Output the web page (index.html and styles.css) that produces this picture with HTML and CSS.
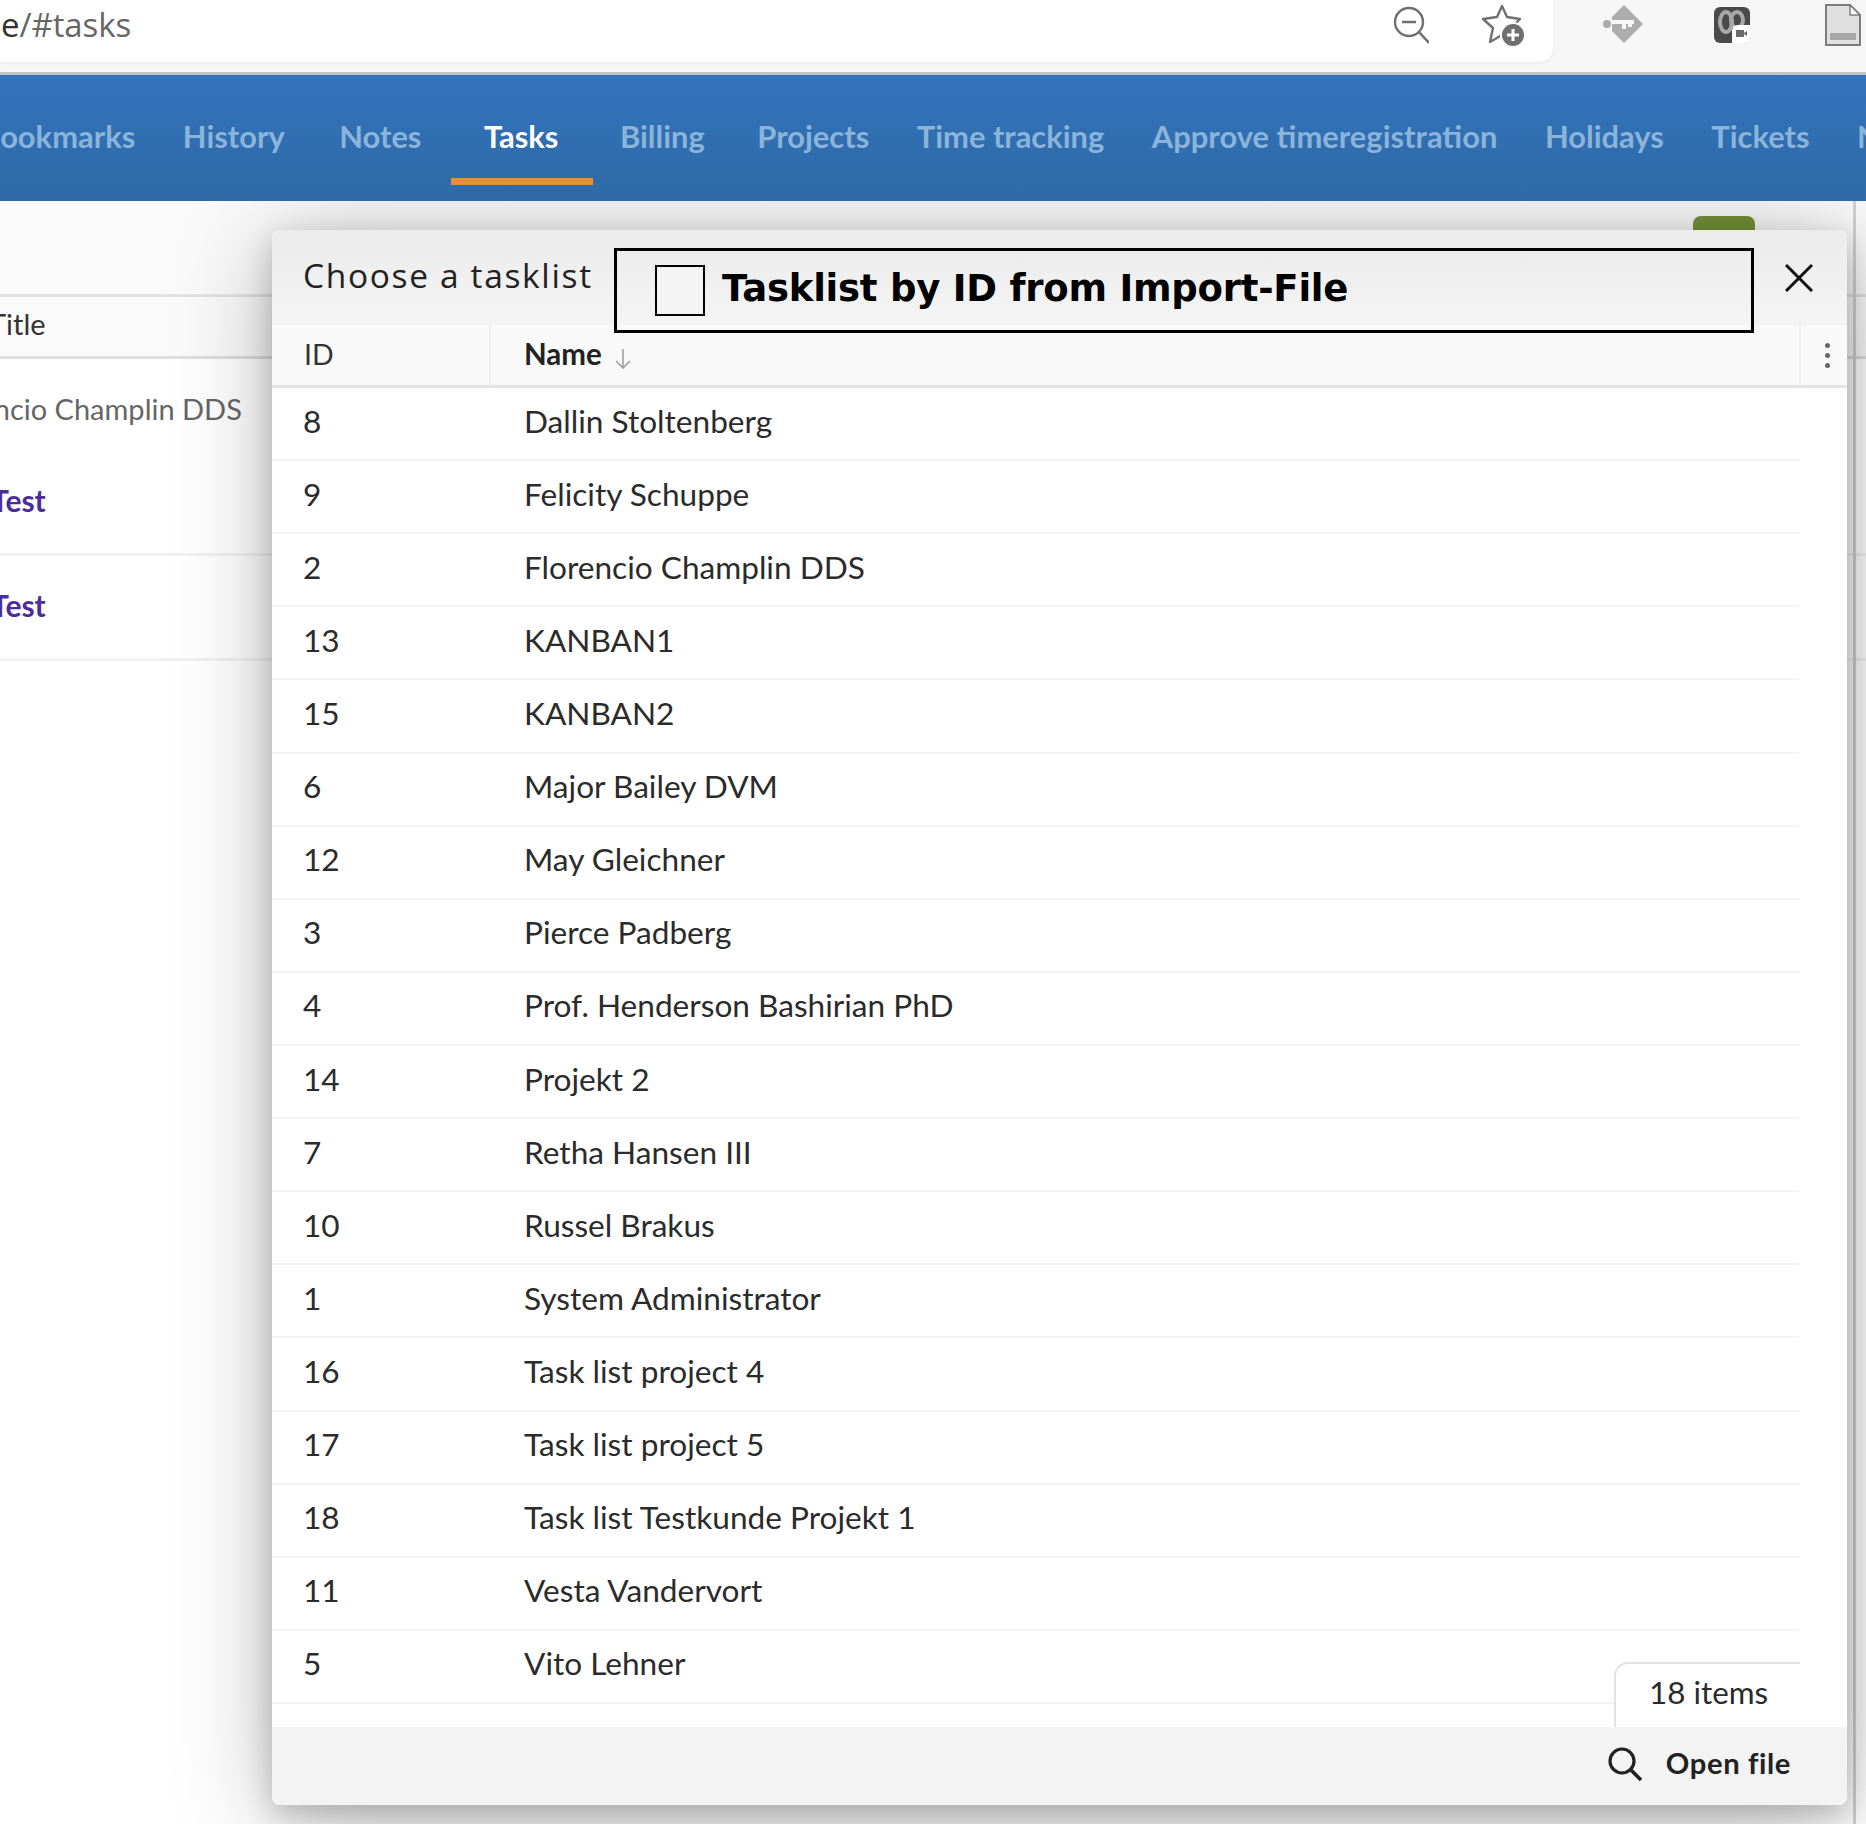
FILE: index.html
```html
<!DOCTYPE html>
<html lang="en">
<head>
<meta charset="utf-8">
<title>Tasks</title>
<link rel="stylesheet" href="styles.css">
</head>
<body>
<div class="page">
  <header class="browser">
    <div class="address">
      <div class="url"><span class="url-dark">e</span>/#tasks</div>
      <svg class="addr-icon zoom-icon" viewBox="0 0 36 40" width="36" height="40"><circle cx="16" cy="16" r="14" fill="none" stroke="#707070" stroke-width="2.4"/><path d="M9 16h14M26 26l10 11" fill="none" stroke="#707070" stroke-width="2.6"/></svg>
      <svg class="addr-icon star-icon" viewBox="0 0 44 44" width="44" height="44"><path d="M21 2l5 11 13 2-9 9 3 14-12-7-12 7 3-14-10-9 14-2z" fill="none" stroke="#707070" stroke-width="2.4" stroke-linejoin="round"/><circle cx="32" cy="31" r="12" fill="#707070" stroke="#fff" stroke-width="2"/><path d="M32 25v12M26 31h12" stroke="#fff" stroke-width="3"/></svg>
    </div>
    <div class="extensions">
      <svg viewBox="0 0 42 42" width="42" height="42"><path d="M22 1l19 19-19 19-12-12v-14z" fill="#acacac"/><path d="M8 18h24M22 18v7M28 18v5" fill="none" stroke="#f6f6f6" stroke-width="4"/><circle cx="5" cy="20" r="4" fill="#acacac"/></svg>
      <svg viewBox="0 0 36 36" width="36" height="36"><rect width="36" height="36" rx="6" fill="#4a4a4a"/><ellipse cx="12" cy="15" rx="6" ry="10" fill="none" stroke="#a8a8a8" stroke-width="4"/><ellipse cx="23" cy="13" rx="6" ry="8" fill="none" stroke="#a8a8a8" stroke-width="4"/><path d="M18 24q0-6 6-6h12v12q0 6-6 6H18z" fill="#fff"/><rect x="22" y="23" width="8" height="7" fill="#6a6a6a"/><path d="M30 26l3-2v5l-3-2z" fill="#6a6a6a"/></svg>
      <svg viewBox="0 0 36 42" width="36" height="42"><path d="M1 1h24l10 10v30H1z" fill="#e0e0e0" stroke="#7c7c7c" stroke-width="2"/><path d="M25 1v10h10z" fill="#fff" stroke="#7c7c7c" stroke-width="1.500"/><rect x="5" y="29" width="26" height="7" fill="#a8a8a8"/></svg>
    </div>
  </header>

  <nav class="nav">
    <a class="nav-item nav-cut">Bookmarks</a>
    <a class="nav-item">History</a>
    <a class="nav-item nav-notes">Notes</a>
    <a class="nav-item nav-active">Tasks</a>
    <a class="nav-item nav-billing">Billing</a>
    <a class="nav-item">Projects</a>
    <a class="nav-item">Time tracking</a>
    <a class="nav-item">Approve timeregistration</a>
    <a class="nav-item">Holidays</a>
    <a class="nav-item">Tickets</a>
    <a class="nav-item">Notes</a>
  </nav>

  <main class="content">
    <div class="toolbar"><span class="green-btn"></span></div>
    <div class="bg-head">Title</div>
    <div class="bg-row bg-row-plain">Florencio Champlin DDS</div>
    <div class="bg-row bg-row-link">Test</div>
    <div class="bg-row bg-row-link">Test</div>

    <section class="modal">
      <div class="modal-head">
        <h2 class="modal-title">Choose a tasklist</h2>
        <label class="import-box"><span class="check"></span><span class="import-label">Tasklist by ID from Import-File</span></label>
        <svg class="close" viewBox="0 0 28 28" width="28" height="28"><path d="M1 1l26 26M27 1L1 27" stroke="#111" stroke-width="3" fill="none"/></svg>
      </div>
      <div class="col-head">
        <div class="cell-id">ID</div>
        <div class="cell-name cell-name-head">Name <svg class="sort" viewBox="0 0 18 20" width="18" height="20"><path d="M9 0v19M2 12l7 7 7-7" fill="none" stroke="#a0a0a0" stroke-width="1.600"/></svg></div>
        <div class="cell-menu"><i></i><i></i><i></i></div>
      </div>
      <div class="rows">
        <div class="row"><div class="cell-id">8</div><div class="cell-name">Dallin Stoltenberg</div></div>
        <div class="row"><div class="cell-id">9</div><div class="cell-name">Felicity Schuppe</div></div>
        <div class="row"><div class="cell-id">2</div><div class="cell-name">Florencio Champlin DDS</div></div>
        <div class="row"><div class="cell-id">13</div><div class="cell-name">KANBAN1</div></div>
        <div class="row"><div class="cell-id">15</div><div class="cell-name">KANBAN2</div></div>
        <div class="row"><div class="cell-id">6</div><div class="cell-name">Major Bailey DVM</div></div>
        <div class="row"><div class="cell-id">12</div><div class="cell-name">May Gleichner</div></div>
        <div class="row"><div class="cell-id">3</div><div class="cell-name">Pierce Padberg</div></div>
        <div class="row"><div class="cell-id">4</div><div class="cell-name">Prof. Henderson Bashirian PhD</div></div>
        <div class="row"><div class="cell-id">14</div><div class="cell-name">Projekt 2</div></div>
        <div class="row"><div class="cell-id">7</div><div class="cell-name">Retha Hansen III</div></div>
        <div class="row"><div class="cell-id">10</div><div class="cell-name">Russel Brakus</div></div>
        <div class="row"><div class="cell-id">1</div><div class="cell-name">System Administrator</div></div>
        <div class="row"><div class="cell-id">16</div><div class="cell-name">Task list project 4</div></div>
        <div class="row"><div class="cell-id">17</div><div class="cell-name">Task list project 5</div></div>
        <div class="row"><div class="cell-id">18</div><div class="cell-name">Task list Testkunde Projekt 1</div></div>
        <div class="row"><div class="cell-id">11</div><div class="cell-name">Vesta Vandervort</div></div>
        <div class="row"><div class="cell-id">5</div><div class="cell-name">Vito Lehner</div></div>
        <div class="count">18 items</div>
      </div>
      <div class="modal-foot">
        <svg viewBox="0 0 36 36" width="36" height="36"><circle cx="15" cy="15" r="12" fill="none" stroke="#222" stroke-width="3.200"/><path d="M24 24l10 10" stroke="#222" stroke-width="3.600"/></svg>
        <span class="open-file">Open file</span>
      </div>
    </section>
  </main>
</div>
</body>
</html>
```

FILE: styles.css
```css
* { box-sizing: border-box; }
html, body { margin: 0; padding: 0; }
body { width: 1866px; height: 1824px; overflow: hidden; background: #fff; font-family: Lato, "Liberation Sans", sans-serif; color: #222; }
.page { width: 1866px; height: 1824px; display: flex; flex-direction: column; overflow: hidden; }

.browser { height: 75px; flex: none; display: flex; background: #f6f6f6; border-bottom: 3px solid #c4c4c4; }
.address { width: 1553px; height: 62px; background: #fff; border-bottom-right-radius: 14px; display: flex; align-items: flex-start; box-shadow: 0 1px 3px rgba(0,0,0,.06); }
.url { flex: 1; font-family: "Open Sans", sans-serif; font-size: 33px; line-height: 50px; color: #666; margin-left: 1px; letter-spacing: -.1px; }
.url-dark { color: #333; }
.addr-icon { flex: none; margin-top: 6px; }
.zoom-icon { margin-right: 52px; margin-top: 6px; }
.star-icon { margin-right: 28px; margin-top: 4px; }
.extensions { flex: 1; display: flex; align-items: flex-start; padding: 4px 0 0 49px; }
.extensions svg { flex: none; }
.extensions svg:nth-child(2) { margin: 3px 0 0 70px; }
.extensions svg:nth-child(3) { margin: 0 0 0 75px; }

.nav { height: 126px; flex: none; display: flex; padding-top: 40px; gap: 47.500px; background: linear-gradient(#3274bc, #2f69a7); }
.nav-item { flex: none; height: 65px; font-size: 30.900px; font-weight: 700; line-height: 44px; color: #8ab4da; white-space: nowrap; }
.nav-cut { margin-left: -20px; }
.nav-notes { margin-left: 7px; margin-right: -1px; }
.nav-active { color: #fff; padding: 0 35px 0 33px; margin: 0 -21px 0 -17px; position: relative; }
.nav-active::after { content: ""; position: absolute; left: 0; right: 0; top: 63px; height: 7px; background: #e8902a; }
.nav-billing { margin-right: 5px; }

.content { flex: 1; position: relative; background: #fff; overflow: hidden; }
.content::before { content: ""; position: absolute; left: 1853px; top: 0; bottom: 0; width: 3px; background: #d2d2d2; }
.toolbar { height: 96px; background: #fafafa; border-bottom: 3px solid #e2e2e2; }
.green-btn { position: absolute; left: 1693px; top: 15px; width: 62px; height: 30px; background: #759338; border-radius: 8px 8px 0 0; }
.bg-head { height: 62px; background: #fafafa; border-bottom: 3px solid #dedede; font-size: 29px; line-height: 54px; color: #333; margin-left: -11px; }
.bg-row { font-size: 30px; white-space: nowrap; }
.bg-row-plain { height: 92px; line-height: 100px; font-size: 29px; color: #666; margin-left: -71px; width: 500px; }
.bg-row-link { height: 105px; line-height: 98px; font-weight: 700; color: #4c2da0; margin-left: -9px; border-bottom: 3px solid #f2f2f2; }

.modal { position: absolute; left: 272px; top: 29px; width: 1575px; height: 1575px; background: #fff; border-radius: 8px; box-shadow: 0 10px 30px rgba(0,0,0,.2), 0 12px 100px rgba(0,0,0,.28); display: flex; flex-direction: column; overflow: hidden; }
.modal-head { height: 95px; flex: none; position: relative; display: flex; background: linear-gradient(#ebebeb, #f4f4f4); }
.modal-title { margin: 0; padding: 23px 0 0 31px; font-family: "Open Sans", sans-serif; font-size: 33.500px; line-height: 44px; font-weight: 400; color: #222; letter-spacing: 1.650px; white-space: nowrap; width: 342px; }
.import-box { position: absolute; left: 342px; top: 18px; width: 1140px; height: 85px; border: 3px solid #000; display: flex; align-items: center; padding: 0 0 4px 38px; z-index: 1; }
.check { width: 50px; height: 51px; border: 2px solid #000; margin: 4px 17px 0 0; flex: none; background: #f4f4f4; }
.import-label { font-family: "DejaVu Sans", sans-serif; font-weight: 700; font-size: 37px; letter-spacing: -.23px; color: #000; white-space: nowrap; }
.close { position: absolute; left: 1513px; top: 34px; }

.col-head { height: 63px; flex: none; display: flex; background: #f9f9f9; border-bottom: 3px solid #e4e4e4; font-size: 28.500px; line-height: 58px; }
.cell-id { width: 219px; padding-left: 31px; flex: none; }
.col-head .cell-id { border-right: 2px solid #efefef; color: #333; padding-left: 32px; }
.cell-name { flex: 1; padding-left: 33px; }
.cell-name-head { font-weight: 700; font-size: 29.500px; color: #222; }
.sort { margin-left: 5px; vertical-align: -4px; }
.cell-menu { width: 48px; flex: none; border-left: 2px solid #efefef; display: flex; flex-direction: column; align-items: center; justify-content: center; gap: 5px; padding-left: 7px; }
.cell-menu i { width: 5px; height: 5px; background: #666; border-radius: 50%; }

.rows { flex: 1; position: relative; padding-right: 48px; overflow: hidden; }
.row { height: 73.120px; display: flex; align-items: center; padding-bottom: 6px; border-bottom: 2px solid #f3f3f3; font-size: 31.600px; color: #2b2b2b; }
.count { position: absolute; right: 47px; bottom: 0; width: 186px; height: 65px; background: #fff; border: 2px solid #e2e2e2; border-right: 0; border-bottom: 0; border-top-left-radius: 14px; font-size: 31.400px; line-height: 56px; padding-left: 33px; color: #2b2b2b; }

.modal-foot { height: 78px; flex: none; background: #f3f3f3; display: flex; align-items: center; justify-content: flex-end; padding: 0 56px 4px 0; gap: 23px; }
.open-file { font-size: 29.200px; font-weight: 700; letter-spacing: .6px; color: #222; margin-bottom: 4px; }
```
